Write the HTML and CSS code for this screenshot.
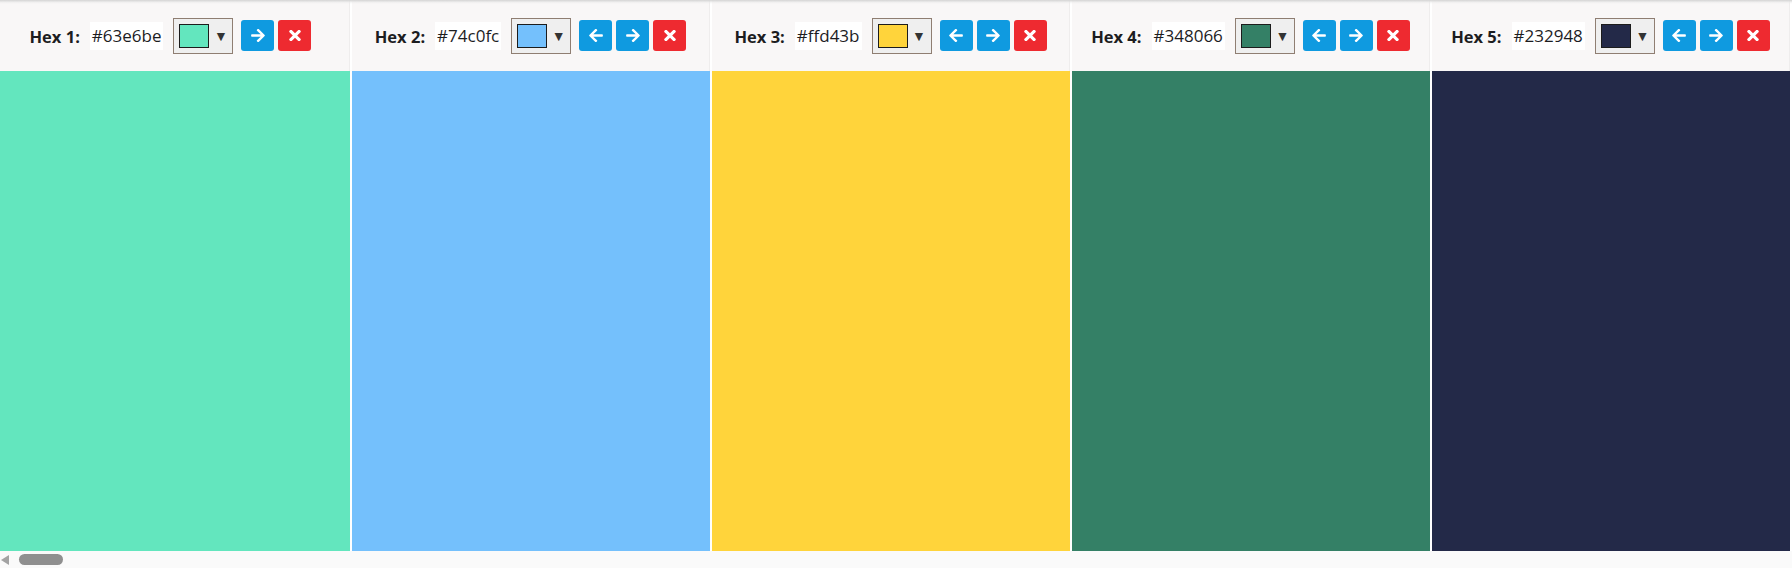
FILE: index.html
```html
<!DOCTYPE html>
<html lang="en">
<head>
<meta charset="utf-8">
<title>Palette</title>
<link rel="stylesheet" href="styles.css">
</head>
<body>
<div class="app">
  <div class="strip">
    <section class="col" style="--c:#63e6be">
      <header class="bar">
        <span class="label">Hex 1:</span>
        <span class="value">#63e6be</span>
        <span class="picker"><span class="chip"></span><span class="caret">▼</span></span>
        <span class="btns">
          <button class="btn move"><svg viewBox="0 44 448 424" width="14" height="13"><path d="M190.5 66.9l22.2-22.2c9.4-9.4 24.6-9.4 33.9 0L441 239c9.4 9.4 9.4 24.6 0 33.9L246.6 467.3c-9.4 9.4-24.6 9.4-33.9 0l-22.2-22.2c-9.5-9.5-9.3-25 .4-34.3L311.4 296H24c-13.3 0-24-10.7-24-24v-32c0-13.3 10.7-24 24-24h287.4L190.9 101.2c-9.8-9.3-10-24.8-.4-34.3z"/></svg></button>
          <button class="btn del"><svg viewBox="0 89 352 334" width="12" height="11"><path d="M242.72 256l100.07-100.07c12.28-12.28 12.28-32.19 0-44.48l-22.24-22.24c-12.28-12.28-32.19-12.28-44.48 0L176 189.28 75.93 89.21c-12.28-12.28-32.19-12.28-44.48 0L9.21 111.45c-12.28 12.28-12.28 32.19 0 44.48L109.28 256 9.21 356.07c-12.28 12.28-12.28 32.19 0 44.48l22.24 22.24c12.28 12.28 32.2 12.28 44.48 0L176 322.72l100.07 100.07c12.28 12.28 32.2 12.28 44.48 0l22.24-22.24c12.28-12.28 12.28-32.19 0-44.48L242.72 256z"/></svg></button>
        </span>
      </header>
      <div class="swatch"></div>
    </section>

    <section class="col" style="--c:#74c0fc">
      <header class="bar">
        <span class="label">Hex 2:</span>
        <span class="value">#74c0fc</span>
        <span class="picker"><span class="chip"></span><span class="caret">▼</span></span>
        <span class="btns">
          <button class="btn move"><svg viewBox="0 44 448 424" width="14" height="13"><path d="M257.5 445.1l-22.2 22.2c-9.4 9.4-24.6 9.4-33.9 0L7 273c-9.4-9.4-9.4-24.6 0-33.9L201.4 44.7c9.4-9.4 24.6-9.4 33.9 0l22.2 22.2c9.5 9.5 9.3 25-.4 34.3L136.6 216H424c13.3 0 24 10.7 24 24v32c0 13.3-10.7 24-24 24H136.6l120.5 114.8c9.8 9.3 10 24.8.4 34.3z"/></svg></button>
          <button class="btn move"><svg viewBox="0 44 448 424" width="14" height="13"><path d="M190.5 66.9l22.2-22.2c9.4-9.4 24.6-9.4 33.9 0L441 239c9.4 9.4 9.4 24.6 0 33.9L246.6 467.3c-9.4 9.4-24.6 9.4-33.9 0l-22.2-22.2c-9.5-9.5-9.3-25 .4-34.3L311.4 296H24c-13.3 0-24-10.7-24-24v-32c0-13.3 10.7-24 24-24h287.4L190.9 101.2c-9.8-9.3-10-24.8-.4-34.3z"/></svg></button>
          <button class="btn del"><svg viewBox="0 89 352 334" width="12" height="11"><path d="M242.72 256l100.07-100.07c12.28-12.28 12.28-32.19 0-44.48l-22.24-22.24c-12.28-12.28-32.19-12.28-44.48 0L176 189.28 75.93 89.21c-12.28-12.28-32.19-12.28-44.48 0L9.21 111.45c-12.28 12.28-12.28 32.19 0 44.48L109.28 256 9.21 356.07c-12.28 12.28-12.28 32.19 0 44.48l22.24 22.24c12.28 12.28 32.2 12.28 44.48 0L176 322.72l100.07 100.07c12.28 12.28 32.2 12.28 44.48 0l22.24-22.24c12.28-12.28 12.28-32.19 0-44.48L242.72 256z"/></svg></button>
        </span>
      </header>
      <div class="swatch"></div>
    </section>

    <section class="col" style="--c:#ffd43b">
      <header class="bar">
        <span class="label">Hex 3:</span>
        <span class="value">#ffd43b</span>
        <span class="picker"><span class="chip"></span><span class="caret">▼</span></span>
        <span class="btns">
          <button class="btn move"><svg viewBox="0 44 448 424" width="14" height="13"><path d="M257.5 445.1l-22.2 22.2c-9.4 9.4-24.6 9.4-33.9 0L7 273c-9.4-9.4-9.4-24.6 0-33.9L201.4 44.7c9.4-9.4 24.6-9.4 33.9 0l22.2 22.2c9.5 9.5 9.3 25-.4 34.3L136.6 216H424c13.3 0 24 10.7 24 24v32c0 13.3-10.7 24-24 24H136.6l120.5 114.8c9.8 9.3 10 24.8.4 34.3z"/></svg></button>
          <button class="btn move"><svg viewBox="0 44 448 424" width="14" height="13"><path d="M190.5 66.9l22.2-22.2c9.4-9.4 24.6-9.4 33.9 0L441 239c9.4 9.4 9.4 24.6 0 33.9L246.6 467.3c-9.4 9.4-24.6 9.4-33.9 0l-22.2-22.2c-9.5-9.5-9.3-25 .4-34.3L311.4 296H24c-13.3 0-24-10.7-24-24v-32c0-13.3 10.7-24 24-24h287.4L190.9 101.2c-9.8-9.3-10-24.8-.4-34.3z"/></svg></button>
          <button class="btn del"><svg viewBox="0 89 352 334" width="12" height="11"><path d="M242.72 256l100.07-100.07c12.28-12.28 12.28-32.19 0-44.48l-22.24-22.24c-12.28-12.28-32.19-12.28-44.48 0L176 189.28 75.93 89.21c-12.28-12.28-32.19-12.28-44.48 0L9.21 111.45c-12.28 12.28-12.28 32.19 0 44.48L109.28 256 9.21 356.07c-12.28 12.28-12.28 32.19 0 44.48l22.24 22.24c12.28 12.28 32.2 12.28 44.48 0L176 322.72l100.07 100.07c12.28 12.28 32.2 12.28 44.48 0l22.24-22.24c12.28-12.28 12.28-32.19 0-44.48L242.72 256z"/></svg></button>
        </span>
      </header>
      <div class="swatch"></div>
    </section>

    <section class="col" style="--c:#348066">
      <header class="bar">
        <span class="label">Hex 4:</span>
        <span class="value">#348066</span>
        <span class="picker"><span class="chip"></span><span class="caret">▼</span></span>
        <span class="btns">
          <button class="btn move"><svg viewBox="0 44 448 424" width="14" height="13"><path d="M257.5 445.1l-22.2 22.2c-9.4 9.4-24.6 9.4-33.9 0L7 273c-9.4-9.4-9.4-24.6 0-33.9L201.4 44.7c9.4-9.4 24.6-9.4 33.9 0l22.2 22.2c9.5 9.5 9.3 25-.4 34.3L136.6 216H424c13.3 0 24 10.7 24 24v32c0 13.3-10.7 24-24 24H136.6l120.5 114.8c9.8 9.3 10 24.8.4 34.3z"/></svg></button>
          <button class="btn move"><svg viewBox="0 44 448 424" width="14" height="13"><path d="M190.5 66.9l22.2-22.2c9.4-9.4 24.6-9.4 33.9 0L441 239c9.4 9.4 9.4 24.6 0 33.9L246.6 467.3c-9.4 9.4-24.6 9.4-33.9 0l-22.2-22.2c-9.5-9.5-9.3-25 .4-34.3L311.4 296H24c-13.3 0-24-10.7-24-24v-32c0-13.3 10.7-24 24-24h287.4L190.9 101.2c-9.8-9.3-10-24.8-.4-34.3z"/></svg></button>
          <button class="btn del"><svg viewBox="0 89 352 334" width="12" height="11"><path d="M242.72 256l100.07-100.07c12.28-12.28 12.28-32.19 0-44.48l-22.24-22.24c-12.28-12.28-32.19-12.28-44.48 0L176 189.28 75.93 89.21c-12.28-12.28-32.19-12.28-44.48 0L9.21 111.45c-12.28 12.28-12.28 32.19 0 44.48L109.28 256 9.21 356.07c-12.28 12.28-12.28 32.19 0 44.48l22.24 22.24c12.28 12.28 32.2 12.28 44.48 0L176 322.72l100.07 100.07c12.28 12.28 32.2 12.28 44.48 0l22.24-22.24c12.28-12.28 12.28-32.19 0-44.48L242.72 256z"/></svg></button>
        </span>
      </header>
      <div class="swatch"></div>
    </section>

    <section class="col" style="--c:#232948">
      <header class="bar">
        <span class="label">Hex 5:</span>
        <span class="value">#232948</span>
        <span class="picker"><span class="chip"></span><span class="caret">▼</span></span>
        <span class="btns">
          <button class="btn move"><svg viewBox="0 44 448 424" width="14" height="13"><path d="M257.5 445.1l-22.2 22.2c-9.4 9.4-24.6 9.4-33.9 0L7 273c-9.4-9.4-9.4-24.6 0-33.9L201.4 44.7c9.4-9.4 24.6-9.4 33.9 0l22.2 22.2c9.5 9.5 9.3 25-.4 34.3L136.6 216H424c13.3 0 24 10.7 24 24v32c0 13.3-10.7 24-24 24H136.6l120.5 114.8c9.8 9.3 10 24.8.4 34.3z"/></svg></button>
          <button class="btn move"><svg viewBox="0 44 448 424" width="14" height="13"><path d="M190.5 66.9l22.2-22.2c9.4-9.4 24.6-9.4 33.9 0L441 239c9.4 9.4 9.4 24.6 0 33.9L246.6 467.3c-9.4 9.4-24.6 9.4-33.9 0l-22.2-22.2c-9.5-9.5-9.3-25 .4-34.3L311.4 296H24c-13.3 0-24-10.7-24-24v-32c0-13.3 10.7-24 24-24h287.4L190.9 101.2c-9.8-9.3-10-24.8-.4-34.3z"/></svg></button>
          <button class="btn del"><svg viewBox="0 89 352 334" width="12" height="11"><path d="M242.72 256l100.07-100.07c12.28-12.28 12.28-32.19 0-44.48l-22.24-22.24c-12.28-12.28-32.19-12.28-44.48 0L176 189.28 75.93 89.21c-12.28-12.28-32.19-12.28-44.48 0L9.21 111.45c-12.28 12.28-12.28 32.19 0 44.48L109.28 256 9.21 356.07c-12.28 12.28-12.28 32.19 0 44.48l22.24 22.24c12.28 12.28 32.2 12.28 44.48 0L176 322.72l100.07 100.07c12.28 12.28 32.2 12.28 44.48 0l22.24-22.24c12.28-12.28 12.28-32.19 0-44.48L242.72 256z"/></svg></button>
        </span>
      </header>
      <div class="swatch"></div>
    </section>

    <section class="col" style="--c:#2a6fdb">
      <header class="bar"></header>
      <div class="swatch"></div>
    </section>
  </div>
  <div class="hscroll">
    <span class="arrow"></span>
    <span class="thumb"></span>
  </div>
</div>
</body>
</html>
```
FILE: styles.css
```css
* { box-sizing: border-box; }

html, body {
  margin: 0;
  padding: 0;
  background: #ffffff;
}

body {
  font-family: "Open Sans", "Noto Sans", "Liberation Sans", sans-serif;
  color: #1d1d1f;
  width: 1792px;
  height: 579px;
  overflow: hidden;
}

.app {
  position: relative;
  width: 1792px;
  overflow: hidden;
}

.app::before {
  content: "";
  position: absolute;
  left: 0;
  right: 0;
  top: 0;
  height: 4px;
  background: linear-gradient(#d4d4d4, rgba(230, 230, 230, 0.4) 60%, rgba(248, 247, 247, 0));
  z-index: 2;
}

.strip {
  display: flex;
  margin-left: -8px;
  height: 551px;
}

.col {
  flex: none;
  width: 358px;
  margin-right: 2px;
  display: flex;
  flex-direction: column;
}

.bar {
  height: 71px;
  flex: none;
  background: #f9f7f7;
  border-right: 1px solid #efeded;
  display: flex;
  align-items: center;
  justify-content: center;
  white-space: nowrap;
}

.label {
  font-weight: 700;
  font-size: 16.5px;
  margin-right: 10px;
  padding-top: 2px;
}

.value {
  background: #ffffff;
  font-size: 17px;
  height: 28px;
  line-height: 28px;
  padding: 0 2px;
  margin-right: 10px;
}

.picker {
  width: 60px;
  height: 36px;
  border: 1px solid #8f7e72;
  background: #efefef;
  display: flex;
  align-items: center;
  padding-left: 5px;
}

.chip {
  width: 30px;
  height: 24px;
  border: 1px solid #1c1c1c;
  background: var(--c);
}

.caret {
  flex: 1;
  text-align: center;
  font-size: 14px;
  color: #333333;
  line-height: 1;
}

.btns {
  display: flex;
  gap: 4px;
  margin-left: 8px;
}

.btn {
  width: 33px;
  height: 31px;
  border: 0;
  border-radius: 3px;
  padding: 0;
  display: flex;
  align-items: center;
  justify-content: center;
  fill: #ffffff;
}

.btn.move { background: #0f9ae0; }
.btn.del { background: #ee2a30; }

.swatch {
  flex: 1;
  background: var(--c);
}

.hscroll {
  height: 17px;
  background: #fafafa;
  position: relative;
  display: flex;
  align-items: center;
}

.arrow {
  width: 0;
  height: 0;
  border-top: 5px solid transparent;
  border-bottom: 5px solid transparent;
  border-right: 8px solid #a3a3a3;
  margin-left: 1px;
}

.thumb {
  width: 44px;
  height: 11px;
  background: #8f8f8f;
  border-radius: 6px;
  margin-left: 10px;
}
```
